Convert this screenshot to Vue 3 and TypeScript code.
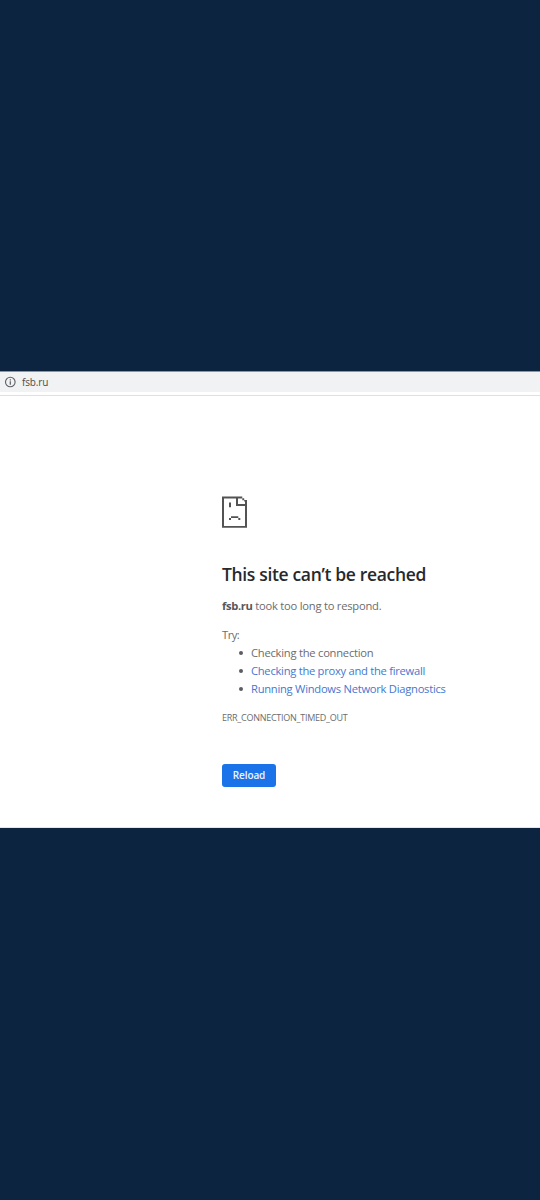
<script setup lang="ts">
interface Suggestion {
  text: string
  link: boolean
  size: string
}

const suggestions: Suggestion[] = [
  { text: 'Checking the connection', link: false, size: 'first' },
  { text: 'Checking the proxy and the firewall', link: true, size: 'second' },
  { text: 'Running Windows Network Diagnostics', link: true, size: 'third' },
]
</script>

<template>
  <div class="screen">
    <main class="browser">
      <header class="address-bar">
        <svg class="info" viewBox="0 0 12 12" width="12" height="12">
          <circle cx="6.3" cy="6" r="4.8" fill="none" stroke="#5b5e62" stroke-width="1.1" />
          <path d="M6.3 5.3V8.7M6.3 3.2V4.4" stroke="#5b5e62" stroke-width="1.2" />
        </svg>
        <span class="url">fsb.ru</span>
      </header>
      <section class="error">
        <svg class="sad" viewBox="0 0 25 32" width="25" height="32" fill="#535353">
          <path d="M0 .5H20.3V2.5H16V8H23V4H25V31.8H0ZM2 2.5V29.9H23V10H14V2.5Z" fill-rule="evenodd" />
          <path d="M20.3 2.3H22.2V4.2H20.3ZM22.2 4H23.2V5.6H22.2ZM7 6.6H9V11.3H7ZM9 20.2H16.3V22.1H9ZM7 22H9V24H7ZM16.3 22H18.3V24H16.3Z" />
        </svg>
        <h1>This site can’t be reached</h1>
        <p class="summary"><strong>fsb.ru</strong> took too long to respond.</p>
        <p class="try">Try:</p>
        <ul>
          <li v-for="item in suggestions" :key="item.text" :class="item.size">
            <a v-if="item.link">{{ item.text }}</a>
            <span v-else>{{ item.text }}</span>
          </li>
        </ul>
        <p class="code">ERR_CONNECTION_TIMED_OUT</p>
        <button type="button">Reload</button>
      </section>
    </main>
  </div>
</template>

<style>
body {
  margin: 0;
  background: #0d2440;
}
</style>

<style scoped>
.screen {
  box-sizing: border-box;
  width: 540px;
  height: 1200px;
  padding-top: 371px;
  background: #0d2440;
  font-family: "Open Sans", "Noto Sans", sans-serif;
  overflow: hidden;
}
.browser {
  box-sizing: border-box;
  height: 457px;
  background: #fff;
  border-top: 1px solid #8997a5;
  border-bottom: 1px solid #dfe7f0;
}
.address-bar {
  box-sizing: border-box;
  height: 24px;
  display: flex;
  align-items: center;
  padding: 0 0 4px 4px;
  background: linear-gradient(#f0f2f4 20px, #fff 20px);
  border-bottom: 1px solid #dedfe1;
}
.info {
  margin-right: 6px;
}
.url {
  font-size: 10px;
  line-height: 18px;
  letter-spacing: -0.15px;
  color: #4b4d50;
}
.error {
  padding: 100px 0 0 222px;
  color: #6b6c6f;
}
.sad {
  display: block;
}
h1 {
  margin: 34px 0 0;
  font-size: 17.5px;
  line-height: 24px;
  font-weight: 600;
  letter-spacing: -0.34px;
  color: #27292c;
  white-space: nowrap;
}
p {
  margin: 0;
  font-size: 11.2px;
  line-height: 18px;
  white-space: nowrap;
}
.summary {
  margin-top: 11px;
  letter-spacing: -0.23px;
}
.summary strong {
  color: #57585b;
  letter-spacing: -0.35px;
}
.try {
  margin-top: 11px;
  letter-spacing: -0.5px;
}
ul {
  margin: 0;
  padding: 0 0 0 29px;
  list-style: none;
}
li {
  display: flex;
  align-items: center;
  height: 18px;
  font-size: 11.2px;
  line-height: 18px;
  white-space: nowrap;
}
.first {
  letter-spacing: -0.24px;
}
.second {
  letter-spacing: -0.27px;
}
.third {
  letter-spacing: -0.26px;
}
li::before {
  content: "";
  flex: none;
  width: 4px;
  height: 4px;
  margin: 0 8px 0 -12px;
  border-radius: 50%;
  background: #5c5d60;
}
a {
  color: #4577d0;
}
.code {
  margin-top: 11px;
  font-size: 9px;
  letter-spacing: -0.26px;
}
button {
  display: block;
  width: 54px;
  height: 23px;
  margin-top: 37px;
  padding: 0;
  border: 0;
  border-radius: 3px;
  background: #1a73e8;
  color: #eef5ff;
  font: 600 10px/23px "Open Sans", sans-serif;
  letter-spacing: -0.1px;
}
</style>
